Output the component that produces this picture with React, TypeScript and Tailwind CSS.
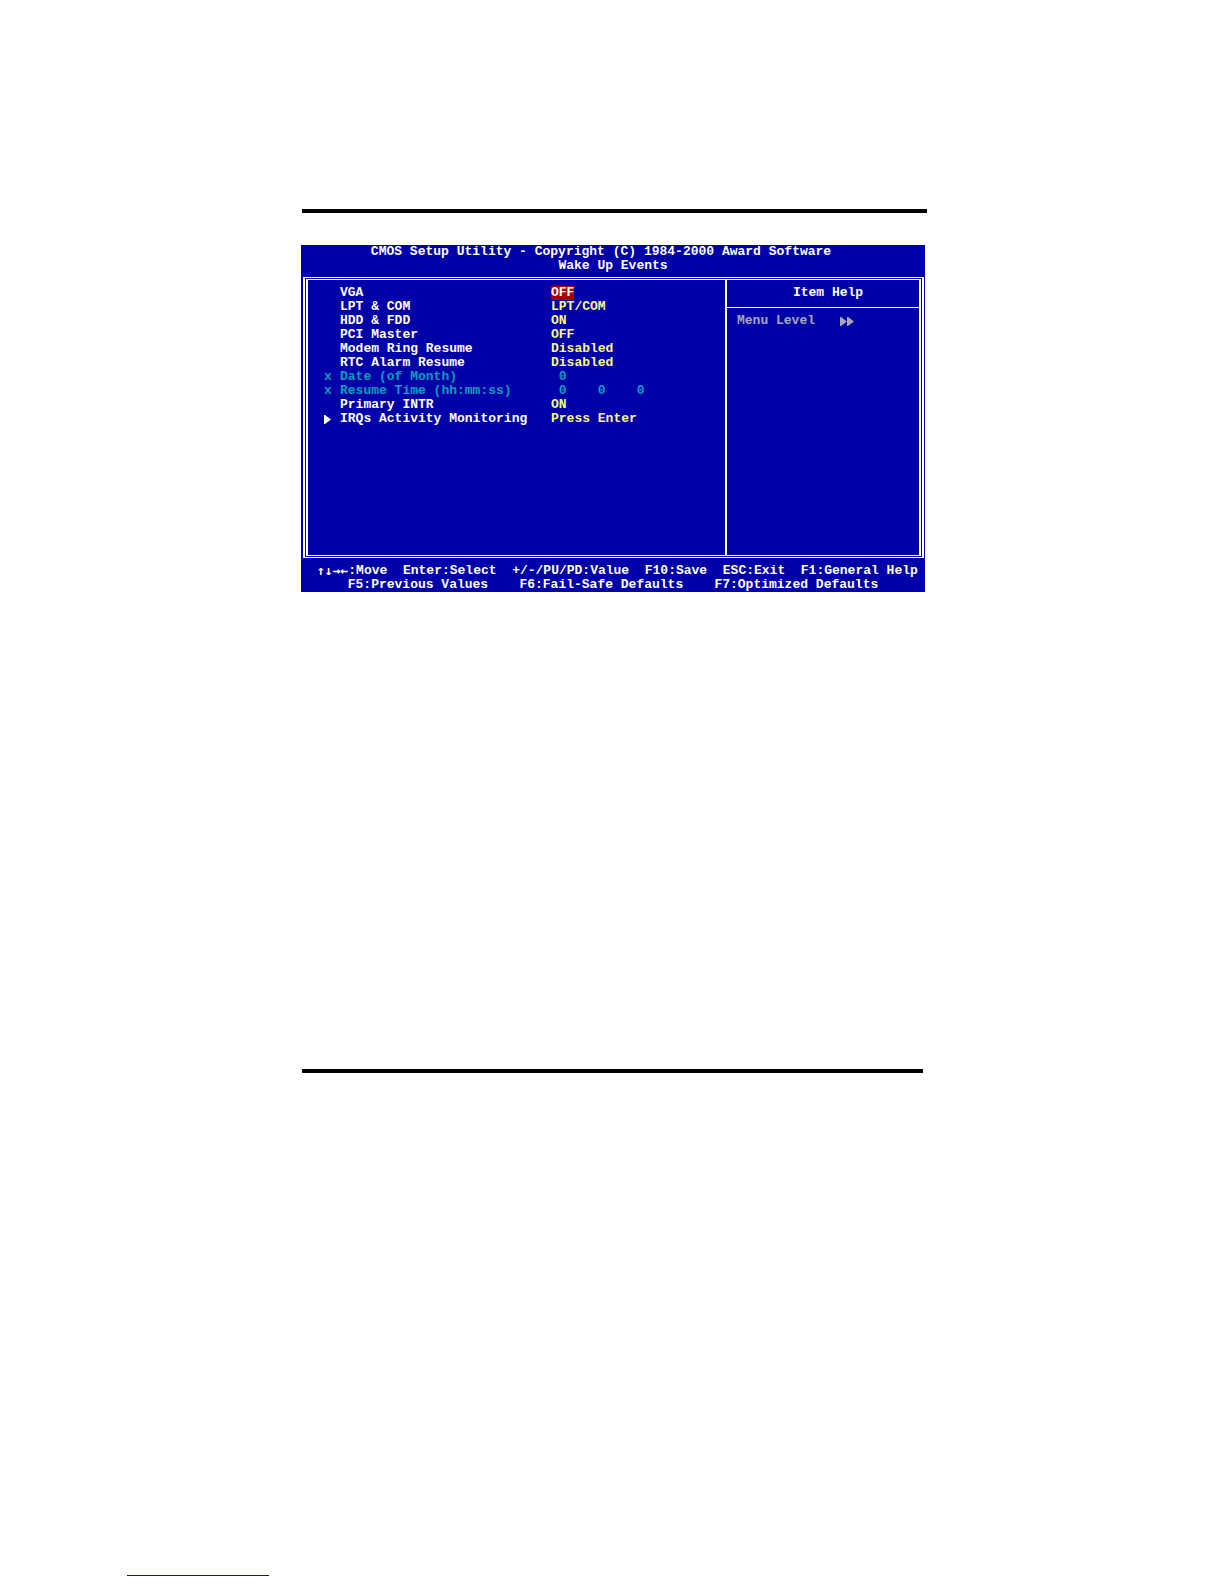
import clsx from "clsx";

interface Setting {
  label: string;
  value: string;
  disabled?: boolean;
  submenu?: boolean;
}

const SETTINGS: Setting[] = [
  { label: "VGA", value: "OFF" },
  { label: "LPT & COM", value: "LPT/COM" },
  { label: "HDD & FDD", value: "ON" },
  { label: "PCI Master", value: "OFF" },
  { label: "Modem Ring Resume", value: "Disabled" },
  { label: "RTC Alarm Resume", value: "Disabled" },
  { label: "Date (of Month)", value: " 0", disabled: true },
  { label: "Resume Time (hh:mm:ss)", value: " 0    0    0", disabled: true },
  { label: "Primary INTR", value: "ON" },
  { label: "IRQs Activity Monitoring", value: "Press Enter", submenu: true },
];

const SELECTED = 0;

function Triangle() {
  return (
    <svg width="7" height="9" viewBox="0 0 7 9" fill="currentColor" aria-hidden>
      <path d="M0 0h1l6 4.500-6 4.500H0z" />
    </svg>
  );
}

function SettingsTable() {
  return (
    <table className="w-full table-fixed border-collapse text-left">
      <colgroup>
        <col className="w-4" />
        <col className="w-[211px]" />
        <col />
      </colgroup>
      <tbody>
        {SETTINGS.map((s, i) => (
          <tr key={s.label} className={clsx("h-[14px]", s.disabled && "text-[#0c9cbc]")}>
            <td className="p-0">
              {s.disabled && "x"}
              {s.submenu && <Triangle />}
            </td>
            <th scope="row" className="p-0 font-bold">
              {s.label}
            </th>
            <td className="p-0">
              <button
                type="button"
                disabled={s.disabled}
                className={clsx(
                  "block whitespace-pre",
                  i === SELECTED && "bg-[#a80000] text-white",
                  i !== SELECTED && !s.disabled && "text-[#fafa90]",
                )}
              >
                {s.value}
              </button>
            </td>
          </tr>
        ))}
      </tbody>
    </table>
  );
}

function ItemHelp() {
  return (
    <aside className="w-[194px] shrink-0 border-l-2 border-white">
      <h2 className="border-b border-white pt-[6px] pb-[7px] pl-[10px] text-center">Item Help</h2>
      <p className="flex items-center pt-[6px] pl-[10px] text-[#a8a8b8]">
        <span className="w-[103px]">Menu Level</span>
        <Triangle />
        <Triangle />
      </p>
    </aside>
  );
}

function SetupScreen() {
  return (
    <section className="mr-[2px] -ml-px bg-[#0000a8] font-['Liberation_Mono',monospace] text-[13px] leading-[14px] font-bold text-white">
      <header className="text-center">
        <h1 className="pr-6">CMOS Setup Utility - Copyright (C) 1984-2000 Award Software</h1>
        <p>Wake Up Events</p>
      </header>

      <div className="mt-1 mr-px ml-[2px] border-x-2 border-y border-white p-px">
        <div className="flex min-h-[277px] border-x-2 border-y border-white">
          <div className="flex-1 pt-[6px] pl-4">
            <SettingsTable />
          </div>
          <ItemHelp />
        </div>
      </div>

      <footer className="pt-[6px] whitespace-pre">
        <p className="flex h-[14px] pl-4">
          <span className="font-['DejaVu_Sans_Mono',monospace]">↑↓→←</span>
          {":Move  Enter:Select  +/-/PU/PD:Value  F10:Save  ESC:Exit  F1:General Help"}
        </p>
        <p className="text-center">
          F5:Previous Values    F6:Fail-Safe Defaults    F7:Optimized Defaults
        </p>
      </footer>
    </section>
  );
}

export default function App() {
  return (
    <div className="bg-white pb-2">
      <main className="pt-[209px] pr-[297px] pl-[302px]">
        <hr className="h-1 border-0 bg-black" />
        <div className="pt-8 pb-[477px]">
          <SetupScreen />
        </div>
        <hr className="mr-1 h-1 border-0 bg-black" />
      </main>
      <hr className="mt-[502px] ml-[127px] w-[142px] border-t border-[#10109c]" />
    </div>
  );
}
